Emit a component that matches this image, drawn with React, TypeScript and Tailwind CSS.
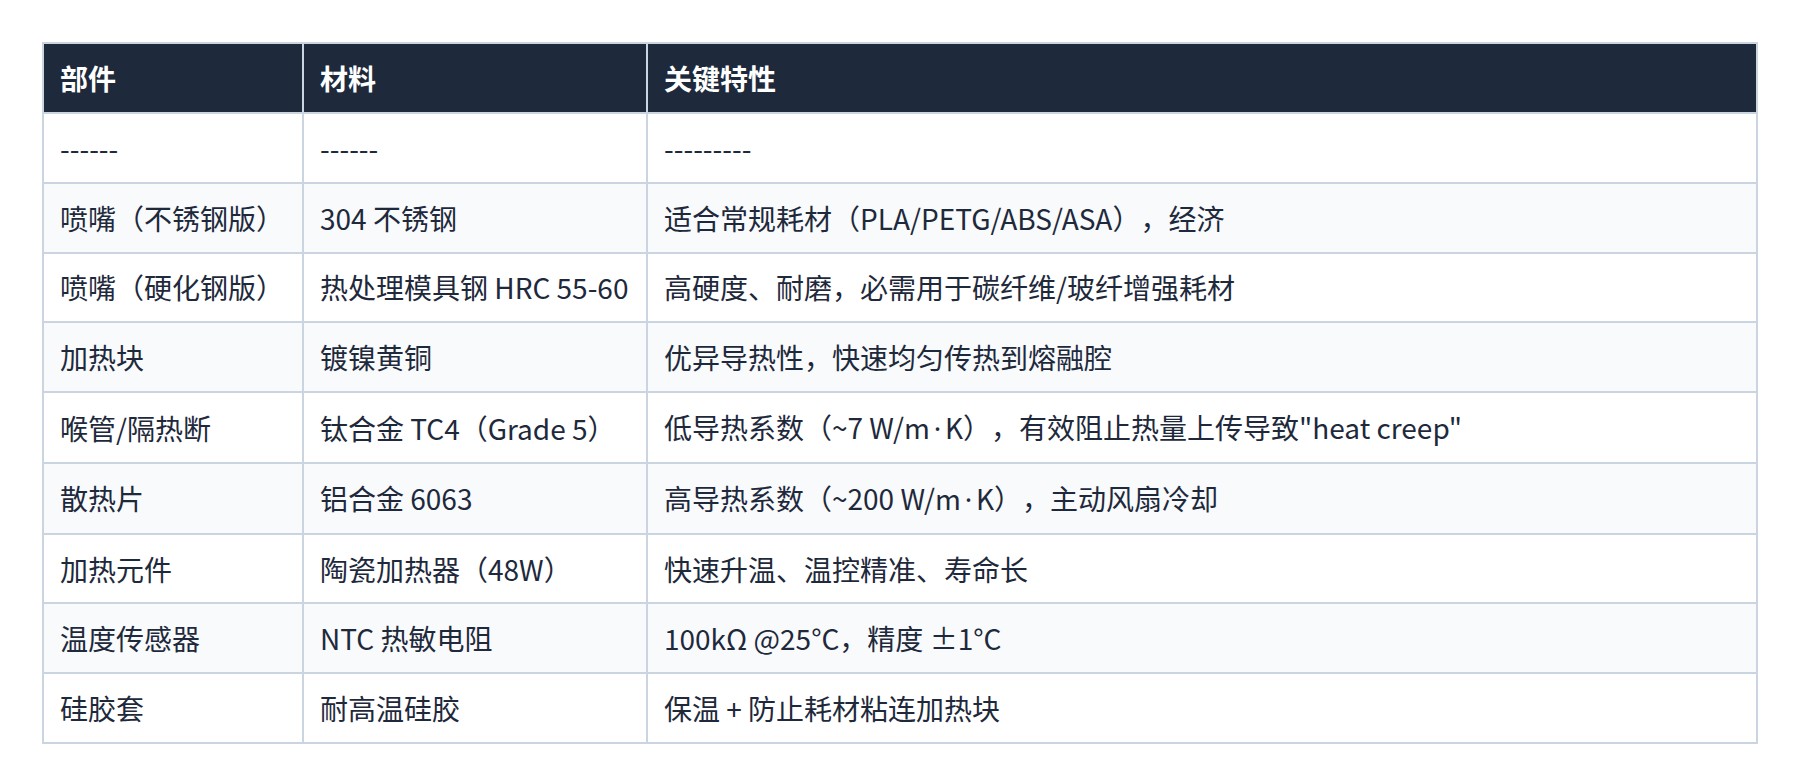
import React from "react";

const Dot = () => (
  <span className="inline-block w-[15px] text-center font-['Noto_Sans',sans-serif]">·</span>
);

const rows: React.ReactNode[][] = [
  ["------", "------", "---------"],
  ["喷嘴（不锈钢版）", "304 不锈钢", "适合常规耗材（PLA/PETG/ABS/ASA），经济"],
  ["喷嘴（硬化钢版）", "热处理模具钢 HRC 55-60", "高硬度、耐磨，必需用于碳纤维/玻纤增强耗材"],
  ["加热块", "镀镍黄铜", "优异导热性，快速均匀传热到熔融腔"],
  [
    "喉管/隔热断",
    "钛合金 TC4（Grade 5）",
    <>
      低导热系数（~7 W/m<Dot />K），有效阻止热量上传导致"heat creep"
    </>,
  ],
  [
    "散热片",
    "铝合金 6063",
    <>
      高导热系数（~200 W/m<Dot />K），主动风扇冷却
    </>,
  ],
  ["加热元件", "陶瓷加热器（48W）", "快速升温、温控精准、寿命长"],
  ["温度传感器", "NTC 热敏电阻", "100kΩ @25°C，精度 ±1°C"],
  ["硅胶套", "耐高温硅胶", "保温 + 防止耗材粘连加热块"],
];

export default function App() {
  return (
    <div
      className="w-[1800px] h-[784px] bg-white p-[42px] [text-spacing-trim:space-all]"
      style={{ fontFamily: '"Noto Sans CJK SC", "Noto Sans", sans-serif' }}
    >
      <table className="w-full table-fixed border-collapse border-2 border-[#cbd5e1] text-[28px] leading-[42px]">
        <colgroup>
          <col className="w-[260px]" />
          <col className="w-[344px]" />
          <col />
        </colgroup>
        <thead>
          <tr className="bg-[#1e293b]">
            <th className="border-2 border-[#cbd5e1] px-4 py-[13px] text-left font-bold text-white">部件</th>
            <th className="border-2 border-[#cbd5e1] px-4 py-[13px] text-left font-bold text-white">材料</th>
            <th className="border-2 border-[#cbd5e1] px-4 py-[13px] text-left font-bold text-white">关键特性</th>
          </tr>
        </thead>
        <tbody>
          {rows.map((r, i) => (
            <tr key={i} className={i % 2 === 1 ? "bg-[#f8fafc]" : "bg-white"}>
              {r.map((c, j) => (
                <td
                  key={j}
                  className="border-2 border-[#cbd5e1] px-4 py-[12.9px] text-[#1e293b] whitespace-nowrap"
                >
                  {c}
                </td>
              ))}
            </tr>
          ))}
        </tbody>
      </table>
    </div>
  );
}
